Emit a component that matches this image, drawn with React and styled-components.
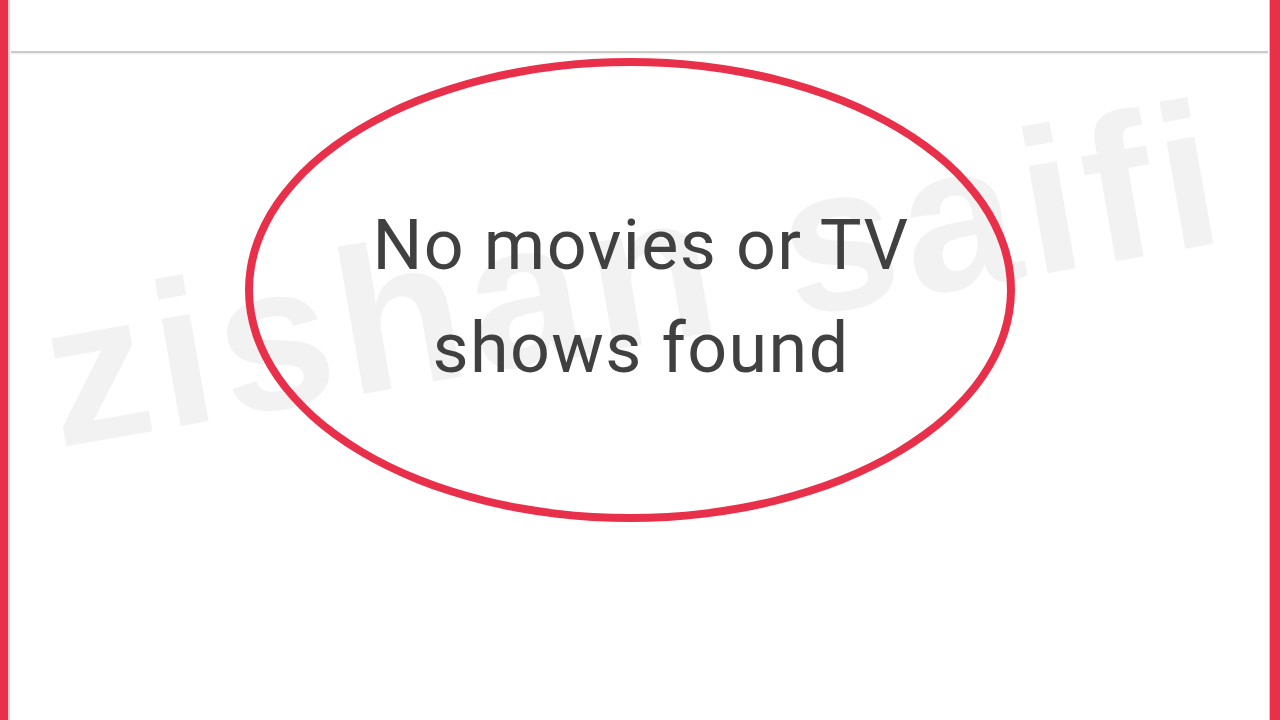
import React from "react";
import styled, { createGlobalStyle } from "styled-components";

const GlobalStyle = createGlobalStyle`
  html, body {
    margin: 0;
    padding: 0;
    background: #ffffff;
  }
  body {
    font-family: Roboto, "Noto Sans", Arial, sans-serif;
  }
`;

const Frame = styled.div`
  position: relative;
  width: 1280px;
  height: 720px;
  display: flex;
  overflow: hidden;
  background: #ffffff;
`;

const SideBar = styled.div`
  width: ${(p) => p.$width}px;
  flex-shrink: 0;
  background: #e9304a;
  box-shadow: ${(p) => (p.$side === "left" ? "2px 0 0 #f9c7ce" : "-1px 0 0 #f6b5bf")};
`;

const Screen = styled.div`
  position: relative;
  flex: 1;
  display: flex;
  flex-direction: column;
  padding: 0 2px 0 3px;
`;

const Header = styled.div`
  height: 51px;
  flex-shrink: 0;
  border-bottom: 2px solid #cbcbcb;
  box-shadow: 0 1px 1px #ececec;
`;

const Body = styled.main`
  position: relative;
  z-index: 1;
  flex: 1;
  padding: 5px 0 0 234px;
`;

const Ellipse = styled.div`
  width: 770px;
  height: 464px;
  box-sizing: border-box;
  border: 8px solid #e9304a;
  border-radius: 50%;
  display: flex;
  align-items: center;
  justify-content: center;
  padding: 14px 0 0 22px;
`;

const Message = styled.p`
  margin: 0;
  font-family: Roboto, "Noto Sans", Arial, sans-serif;
  font-size: 70px;
  line-height: 103px;
  font-weight: 400;
  color: #404040;
  text-align: center;
  letter-spacing: 1.4px;
`;

const Watermark = styled.div`
  position: absolute;
  z-index: 0;
  left: 634px;
  top: 274px;
  transform: translate(-50%, -50%) rotate(-10deg);
  font-family: "Liberation Sans", Arial, sans-serif;
  font-weight: 700;
  font-size: 206px;
  line-height: 1;
  letter-spacing: 7px;
  white-space: nowrap;
  color: #f2f2f2;
  pointer-events: none;
  user-select: none;
`;

export default function App() {
  return (
    <>
      <GlobalStyle />
      <Frame>
        <Watermark>zishan saifi</Watermark>
        <SideBar $width={8} $side="left" />
        <Screen>
          <Header />
          <Body>
            <Ellipse>
              <Message>
                No movies or TV
                <br />
                shows found
              </Message>
            </Ellipse>
          </Body>
        </Screen>
        <SideBar $width={10} $side="right" />
      </Frame>
    </>
  );
}
